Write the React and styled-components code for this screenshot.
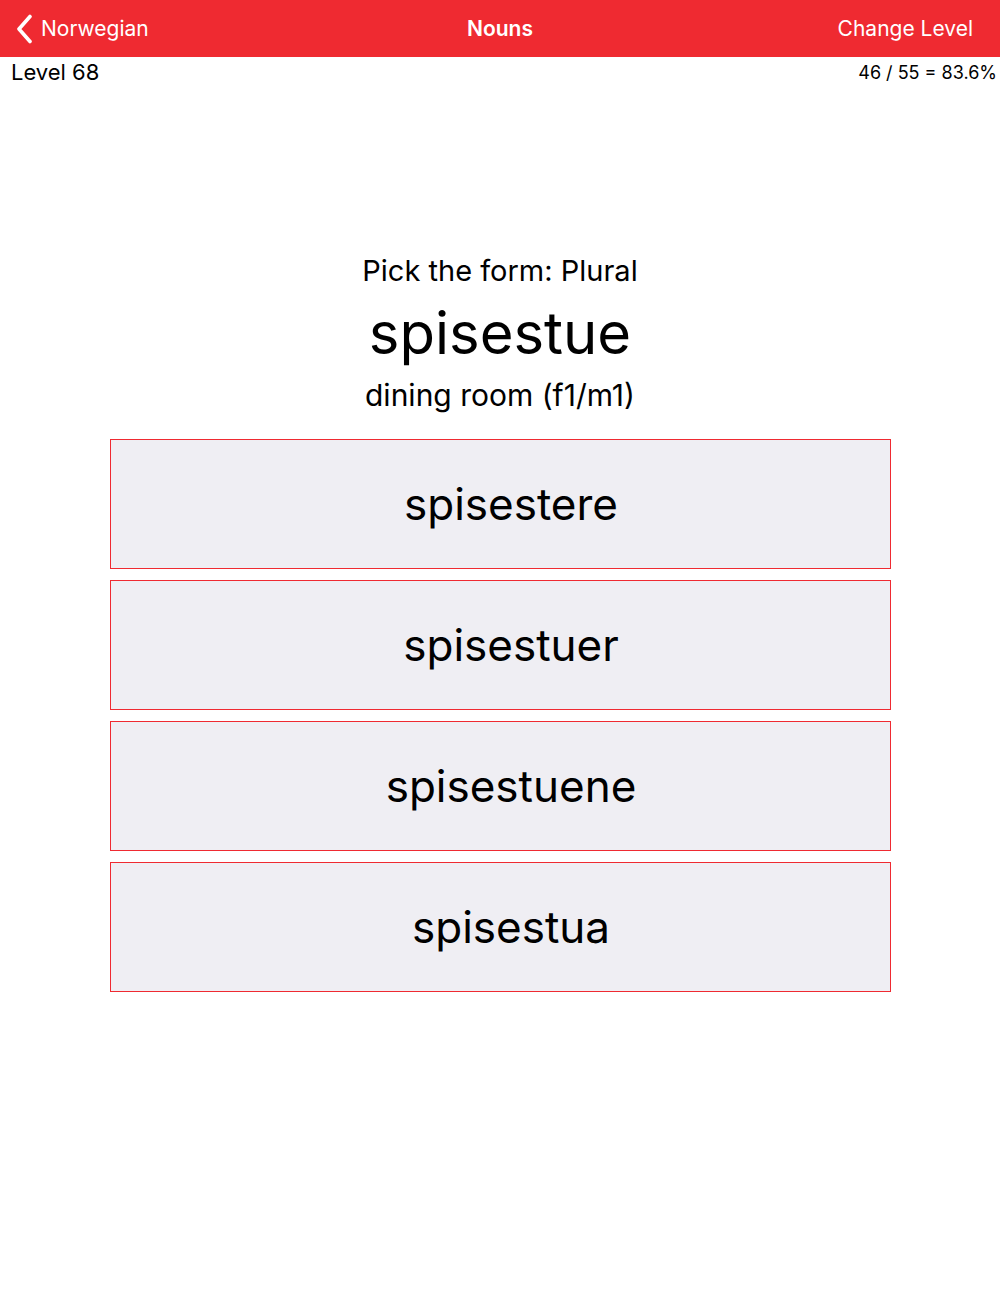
import styled, { createGlobalStyle } from "styled-components";

const Global = createGlobalStyle`
    html, body {
        margin: 0;
        padding: 0;
        background: #ffffff;
        font-family: Inter, "Liberation Sans", sans-serif;
        color: #000;
    }
`

const Page = styled.div`
    width: 1000px;
    min-height: 1307px;
    background: #fff;
`

const NavBar = styled.div`
    height: 57px;
    background: #EF2A31;
    display: grid;
    grid-template-columns: 1fr auto 1fr;
    align-items: center;
    color: #fff;
    font-size: 21px;
`

const BackButton = styled.div`
    display: flex;
    align-items: center;
    gap: 5px;
    padding-left: 14px;
    svg{
        width: 22px;
        height: 30px;
    }
`

const Title = styled.div`
    font-weight: 600;
    font-size: 21px;
`

const RightButton = styled.div`
    justify-self: end;
    padding-right: 27px;
`

const StatusRow = styled.div`
    display: flex;
    justify-content: space-between;
    align-items: center;
    padding: 0 3px 0 11px;
    height: 30px;
`

const Level = styled.span`
    font-size: 22px;
`

const Score = styled.span`
    font-size: 18px;
`

const Question = styled.div`
    display: flex;
    flex-direction: column;
    align-items: center;
    margin-top: 167px;
`

const Prompt = styled.div`
    font-size: 29px;
    line-height: 34px;
`

const Word = styled.div`
    font-size: 58px;
    line-height: 70px;
    margin-top: 10px;
`

const Meaning = styled.div`
    font-size: 30px;
    line-height: 36px;
    margin-top: 9px;
`

const Choices = styled.div`
    display: flex;
    flex-direction: column;
    gap: 11px;
    width: 781px;
    margin: 26px auto 0;
`

const Choice = styled.div`
    height: 128px;
    border: 1px solid #EF2A31;
    background: #EFEEF3;
    display: flex;
    align-items: center;
    justify-content: center;
    padding-left: 22px;
    font-size: 44px;
`

function App(){
    const options=['spisestere','spisestuer','spisestuene','spisestua'];

    return(
        <Page>
            <Global/>
            <NavBar>
                <BackButton>
                    <svg viewBox="0 0 22 30" fill="none">
                        <path d="M16 2.5 L5 15 L16 27.5" stroke="#fff" strokeWidth="3.6" strokeLinecap="round" strokeLinejoin="round"/>
                    </svg>
                    <span>Norwegian</span>
                </BackButton>
                <Title>Nouns</Title>
                <RightButton>Change Level</RightButton>
            </NavBar>
            <StatusRow>
                <Level>Level 68</Level>
                <Score>46 / 55 = 83.6%</Score>
            </StatusRow>
            <Question>
                <Prompt>Pick the form: Plural</Prompt>
                <Word>spisestue</Word>
                <Meaning>dining room (f1/m1)</Meaning>
            </Question>
            <Choices>
                {options.map((o)=>(
                    <Choice key={o}>{o}</Choice>
                ))}
            </Choices>
        </Page>
    );
}
export default App;
